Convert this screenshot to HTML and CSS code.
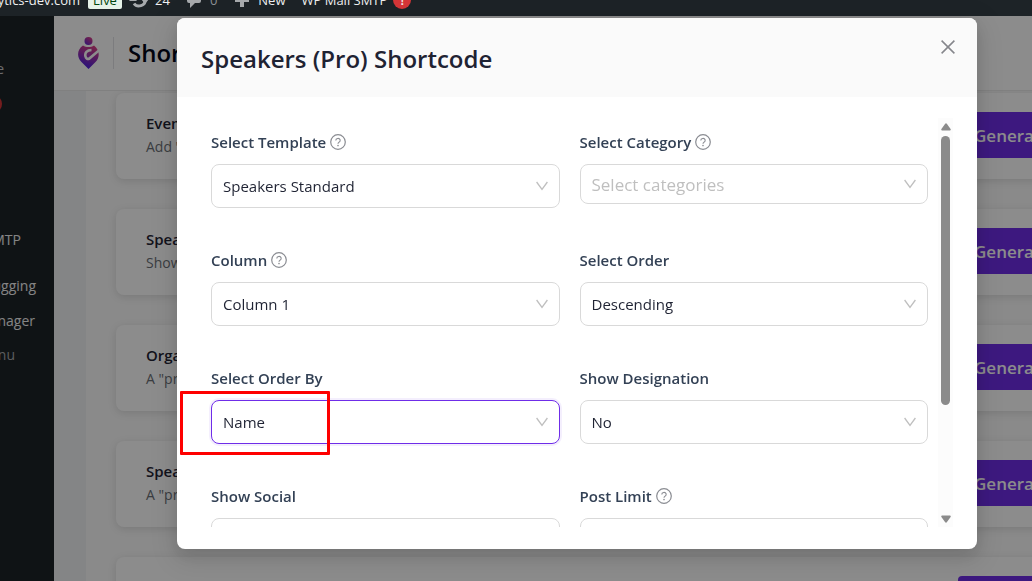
FILE: index.html
```html
<!DOCTYPE html>
<html lang="en">

<head>
    <meta charset="UTF-8">
    <meta name="viewport" content="width=device-width, initial-scale=1.0">
    <title>Shortcodes</title>
    <link rel="stylesheet" href="styles.css">
</head>

<body>
    <!-- icons used more than once -->
    <svg class="icon-defs" aria-hidden="true">
        <symbol id="icon-help" viewBox="0 0 16 16">
            <circle cx="8" cy="8" r="7.3" fill="none" stroke="currentColor" stroke-width="1.2" />
            <path d="M5.8 6.5a2.2 2 0 1 1 3.2 1.700c-.7.4-1 .8-1 1.600" fill="none" stroke="currentColor" stroke-width="1.1" />
            <circle cx="8" cy="11.6" r=".8" fill="currentColor" />
        </symbol>
        <symbol id="icon-arrow" viewBox="0 0 12 10">
            <path d="M.6 1L6 8.400 11.400 1" fill="none" stroke="currentColor" stroke-width="1.3" />
        </symbol>
    </svg>

    <nav class="admin-bar">
        <a href="#" class="site-name">analytics-dev.com</a>
        <span class="live-badge">Live</span>
        <a href="#" class="bar-item updates">
            <svg width="20" height="16" viewBox="0 0 20 16"><path d="M4 8a6 5.500 0 0 1 11-3M16 8a6 5.500 0 0 1-11 3.500" fill="none" stroke="currentColor" stroke-width="3" /><path d="M0 9h8L4 4zM20 7h-8l4 5z" fill="currentColor" /></svg>
            24
        </a>
        <a href="#" class="bar-item comments">
            <svg width="16" height="18" viewBox="0 0 16 18"><path d="M3 1h10a2 2 0 0 1 2 2v7a2 2 0 0 1-2 2H9l-5 5v-5H3a2 2 0 0 1-2-2V3a2 2 0 0 1 2-2z" fill="currentColor" /></svg>
            <span>0</span>
        </a>
        <a href="#" class="bar-item new">
            <svg width="14" height="14" viewBox="0 0 14 14"><path d="M7 0v14M0 7h14" stroke="currentColor" stroke-width="4" /></svg>
            New
        </a>
        <a href="#" class="bar-item">WP Mail SMTP <span class="alert-badge">!</span></a>
    </nav>

    <div class="layout">
        <aside class="side-menu">
            <a href="#" class="side-home">Home</a>
            <span class="side-badge"></span>
            <a href="#" class="side-mail">WP Mail SMTP</a>
            <a href="#" class="side-debug">WP Debugging</a>
            <a href="#" class="side-files">File Manager</a>
            <a href="#" class="side-collapse">Collapse menu</a>
        </aside>

        <main class="page">
            <header class="page-header">
                <svg class="logo" width="21" height="32" viewBox="0 0 21 32">
                    <defs>
                        <linearGradient id="logo-fill" gradientUnits="userSpaceOnUse" x1="17" y1="6" x2="7" y2="30">
                            <stop offset="0" stop-color="#f04478" />
                            <stop offset="0.4" stop-color="#b2369c" />
                            <stop offset="1" stop-color="#4f20e0" />
                        </linearGradient>
                        <linearGradient id="logo-head" x1="1" y1="0" x2="0.2" y2="1">
                            <stop offset="0" stop-color="#e8407c" />
                            <stop offset="1" stop-color="#6428d0" />
                        </linearGradient>
                        <mask id="logo-cut">
                            <rect width="21" height="32" fill="#fff" />
                            <path d="M13.500 13C9 13 6.500 16 7.500 19.500c.5 2 2 3 3.500 2.300L22 12.500" fill="none" stroke="#000" stroke-width="2.600" />
                        </mask>
                    </defs>
                    <circle cx="10.500" cy="4" r="4" fill="url(#logo-head)" />
                    <path d="M5 8.500c3 2 8 2 11 0 6 4.500 6 12 1.500 16.500L10.500 32l-7-7C-1.500 20-1 12.500 5 8.500z" fill="url(#logo-fill)" mask="url(#logo-cut)" />
                </svg>
                <h1>Shortcodes</h1>
            </header>

            <div class="page-body">
                <div class="card-list">
                    <section class="card">
                        <div>
                            <h2>Events</h2>
                            <p>Add "events" shortcode</p>
                        </div>
                        <button type="button" class="generate-btn">Generate Shortcode</button>
                    </section>
                    <section class="card">
                        <div>
                            <h2>Speakers</h2>
                            <p>Show speakers list</p>
                        </div>
                        <button type="button" class="generate-btn">Generate Shortcode</button>
                    </section>
                    <section class="card">
                        <div>
                            <h2>Organizers</h2>
                            <p>A "pro" shortcode</p>
                        </div>
                        <button type="button" class="generate-btn">Generate Shortcode</button>
                    </section>
                    <section class="card">
                        <div>
                            <h2>Speakers (Pro)</h2>
                            <p>A "pro" shortcode</p>
                        </div>
                        <button type="button" class="generate-btn">Generate Shortcode</button>
                    </section>
                    <section class="card">
                        <div>
                            <h2>Schedules</h2>
                            <p>A "pro" shortcode</p>
                        </div>
                        <button type="button" class="generate-btn">Generate Shortcode</button>
                    </section>
                </div>
            </div>
        </main>
    </div>

    <div class="overlay">
        <div class="modal" role="dialog" aria-labelledby="modal-title">
            <header class="modal-header">
                <h2 id="modal-title">Speakers (Pro) Shortcode</h2>
                <button type="button" class="close-btn" aria-label="Close">
                    <svg width="14" height="14" viewBox="0 0 14 14"><path d="M.6.6l12.800 12.800M13.400.6L.6 13.400" stroke="currentColor" stroke-width="1.5" /></svg>
                </button>
            </header>

            <div class="modal-body">
                <form class="fields">
                    <div class="field">
                        <label for="template">Select Template <svg class="help"><use href="#icon-help" /></svg></label>
                        <div class="select-wrap">
                            <select id="template"><option>Speakers Standard</option></select>
                            <svg class="arrow"><use href="#icon-arrow" /></svg>
                        </div>
                    </div>
                    <div class="field">
                        <label for="category">Select Category <svg class="help"><use href="#icon-help" /></svg></label>
                        <div class="select-wrap">
                            <select id="category" class="empty"><option>Select categories</option></select>
                            <svg class="arrow"><use href="#icon-arrow" /></svg>
                        </div>
                    </div>
                    <div class="field">
                        <label for="column">Column <svg class="help"><use href="#icon-help" /></svg></label>
                        <div class="select-wrap">
                            <select id="column"><option>Column 1</option></select>
                            <svg class="arrow"><use href="#icon-arrow" /></svg>
                        </div>
                    </div>
                    <div class="field">
                        <label for="order">Select Order</label>
                        <div class="select-wrap">
                            <select id="order"><option>Descending</option></select>
                            <svg class="arrow"><use href="#icon-arrow" /></svg>
                        </div>
                    </div>
                    <div class="field">
                        <label for="order-by">Select Order By</label>
                        <div class="select-wrap">
                            <select id="order-by" class="active"><option>Name</option></select>
                            <svg class="arrow"><use href="#icon-arrow" /></svg>
                            <span class="marker"></span>
                        </div>
                    </div>
                    <div class="field">
                        <label for="designation">Show Designation</label>
                        <div class="select-wrap">
                            <select id="designation"><option>No</option></select>
                            <svg class="arrow"><use href="#icon-arrow" /></svg>
                        </div>
                    </div>
                    <div class="field">
                        <label for="social">Show Social</label>
                        <div class="select-wrap">
                            <select id="social"><option>No</option></select>
                            <svg class="arrow"><use href="#icon-arrow" /></svg>
                        </div>
                    </div>
                    <div class="field">
                        <label for="limit">Post Limit <svg class="help"><use href="#icon-help" /></svg></label>
                        <input id="limit" type="text">
                    </div>
                </form>

                <div class="scrollbar" aria-hidden="true">
                    <svg width="10" height="8" viewBox="0 0 10 8"><path d="M4 1q1-1.400 2 0l3.600 5q.6 1.500-.8 1.500H1.200Q-.2 7.500.4 6z" fill="#8b8b8b" /></svg>
                    <div class="thumb-area">
                        <div class="thumb"></div>
                    </div>
                    <svg width="10" height="8" viewBox="0 0 10 8"><path d="M4 7q1 1.400 2 0l3.600-5Q10.200.5 8.800.5H1.200Q-.2.5.4 2z" fill="#8b8b8b" /></svg>
                </div>
            </div>
        </div>
    </div>
</body>

</html>
```

FILE: styles.css
```css
* {
    box-sizing: border-box;
}

body {
    margin: 0;
    height: 100vh;
    display: flex;
    flex-direction: column;
    overflow: hidden;
    font-family: "Open Sans", "Noto Sans", sans-serif;
    color: #1f2333;
}

h1,
h2,
p {
    margin: 0;
}

a {
    color: inherit;
    text-decoration: none;
}

button,
input,
select {
    font-family: inherit;
}

.icon-defs {
    position: absolute;
    width: 0;
    height: 0;
}

/* admin bar, scrolled half out of the window */
.admin-bar {
    height: 16px;
    flex: none;
    display: flex;
    align-items: flex-end;
    overflow: hidden;
    background: #1d2327;
    color: #f0f0f1;
    font-size: 13px;
    line-height: 32px;
    white-space: nowrap;
}

.site-name {
    width: 80px;
    display: flex;
    justify-content: flex-end;
}

.live-badge {
    width: 34px;
    margin: 0 7px 7px 8px;
    border-radius: 2px;
    background: #e6f2e8;
    color: #00450c;
    line-height: 18px;
    text-align: center;
}

.bar-item {
    display: flex;
    align-items: center;
    gap: 6px;
    margin-right: 16px;
}

.bar-item svg {
    color: #a7aaad;
}

.comments {
    gap: 8px;
    margin-right: 18px;
}

.comments span {
    color: #8c9196;
}

.new {
    gap: 9px;
}

.alert-badge {
    width: 18px;
    height: 18px;
    border-radius: 9px;
    background: #d63638;
    font-weight: 600;
    line-height: 18px;
    text-align: center;
}

.layout {
    flex: 1;
    min-height: 0;
    display: flex;
}

.side-menu {
    width: 54px;
    flex: none;
    display: flex;
    flex-direction: column;
    align-items: flex-end;
    overflow: hidden;
    padding-top: 43px;
    background: #1d2327;
    color: #f0f0f1;
    font-size: 14px;
    line-height: 20px;
    white-space: nowrap;
}

.side-home {
    margin-right: 50px;
    color: #c3c4c7;
}

.side-badge {
    width: 18px;
    height: 18px;
    margin: 16px 52px 0 0;
    border-radius: 9px;
    background: #d63638;
}

.side-mail {
    margin: 117px 33px 0 0;
}

.side-debug {
    margin: 26px 18px 0 0;
}

.side-files {
    margin: 15px 19px 0 0;
}

.side-collapse {
    margin: 14px 39px 0 0;
    color: #a7aaad;
}

.page {
    flex: 1;
    min-width: 0;
    display: flex;
    flex-direction: column;
    background: #f0f2f5;
}

.page-header {
    height: 75px;
    flex: none;
    display: flex;
    align-items: center;
    padding: 0 24px;
    border-bottom: 1px solid #eaeaea;
    background: #fff;
}

.page-header h1 {
    margin-left: 14px;
    padding-left: 14px;
    border-left: 1px solid #e2e2e6;
    color: #020617;
    font-size: 24px;
    font-weight: 600;
    line-height: 32px;
}

.page-body {
    flex: 1;
    min-height: 0;
    overflow: hidden;
    margin-left: 32px;
    padding: 2px 0 0 30px;
    background: #fbfbfb;
}

/* the list is wider than the window */
.card-list {
    display: grid;
    gap: 30px;
    margin-right: -146px;
}

.card {
    display: grid;
    grid-template-columns: 1fr 190px;
    align-items: center;
    padding: 19px 30px 21px;
    border-radius: 8px;
    background: #fff;
    box-shadow: 0 2px 8px rgba(0, 0, 0, 0.12);
}

.card h2 {
    font-size: 15px;
    font-weight: 600;
    line-height: 23px;
}

.card p {
    color: #6b6f76;
    font-size: 14px;
    line-height: 23px;
}

.generate-btn {
    height: 46px;
    padding: 0 16px;
    border: none;
    border-radius: 4px;
    background: #6f2de8;
    color: #fff;
    font-size: 17px;
    font-weight: 600;
    text-align: left;
    white-space: nowrap;
    overflow: hidden;
    cursor: pointer;
}

.overlay {
    position: fixed;
    top: 16px;
    right: 0;
    bottom: 0;
    left: 0;
    display: flex;
    padding: 2px 55px 32px 177px;
    background: rgba(0, 0, 0, 0.45);
}

.modal {
    flex: 1;
    min-width: 0;
    display: flex;
    flex-direction: column;
    border-radius: 8px;
    background: #fff;
    box-shadow: 0 6px 16px rgba(0, 0, 0, 0.12), 0 9px 28px 8px rgba(0, 0, 0, 0.08);
}

.modal-header {
    display: flex;
    justify-content: space-between;
    align-items: flex-start;
    padding: 20px 20px 17px 24px;
    border-radius: 8px 8px 0 0;
    background: #fafafa;
}

.modal-header h2 {
    font-size: 24px;
    font-weight: 600;
    line-height: 42px;
}

.close-btn {
    width: 18px;
    height: 18px;
    display: flex;
    align-items: center;
    justify-content: center;
    padding: 0;
    border: none;
    background: none;
    color: #85868b;
    cursor: pointer;
}

.modal-body {
    flex: 1;
    min-height: 0;
    display: flex;
    padding: 21px 24px 22px 0;
}

.fields {
    flex: 1;
    min-width: 0;
    display: grid;
    grid-template-columns: 1fr 1fr;
    align-content: start;
    gap: 40px 20px;
    overflow: hidden;
    padding: 12px 10px 0 34px;
}

.field label {
    display: flex;
    align-items: center;
    gap: 4px;
    margin-bottom: 10px;
    color: #334155;
    font-size: 15px;
    font-weight: 600;
    line-height: 24px;
}

.help {
    width: 16px;
    height: 16px;
    color: #8a8c92;
}

.select-wrap {
    position: relative;
    display: flex;
}

.field select,
.field input {
    width: 100%;
    height: 44px;
    padding: 0 11px;
    border: 1px solid #d9d9d9;
    border-radius: 8px;
    outline: none;
    appearance: none;
    background: #fff;
    color: #1f2333;
    font-size: 15px;
}

.field select.empty {
    height: 40px;
    color: #bfbfbf;
    font-size: 17px;
}

.field select.active {
    border-color: #6f2de8;
    box-shadow: 0 0 0 2px rgba(111, 45, 232, 0.08);
}

.arrow {
    position: absolute;
    top: 50%;
    right: 12px;
    width: 12px;
    height: 10px;
    margin-top: -5px;
    color: #bfbfbf;
    pointer-events: none;
}

/* red frame round the chosen value */
.marker {
    position: absolute;
    top: -9px;
    left: -31px;
    width: 150px;
    height: 64px;
    border: 3px solid #fe0000;
    border-radius: 1px;
    pointer-events: none;
}

.scrollbar {
    width: 15px;
    display: flex;
    flex-direction: column;
    align-items: center;
    gap: 5px;
    padding: 5px 0 4px;
    background: #fcfcfc;
}

.scrollbar svg {
    flex: none;
}

.thumb-area {
    flex: 1;
}

.thumb {
    width: 9px;
    height: 72%;
    border-radius: 5px;
    background: #8b8b8b;
}
```
